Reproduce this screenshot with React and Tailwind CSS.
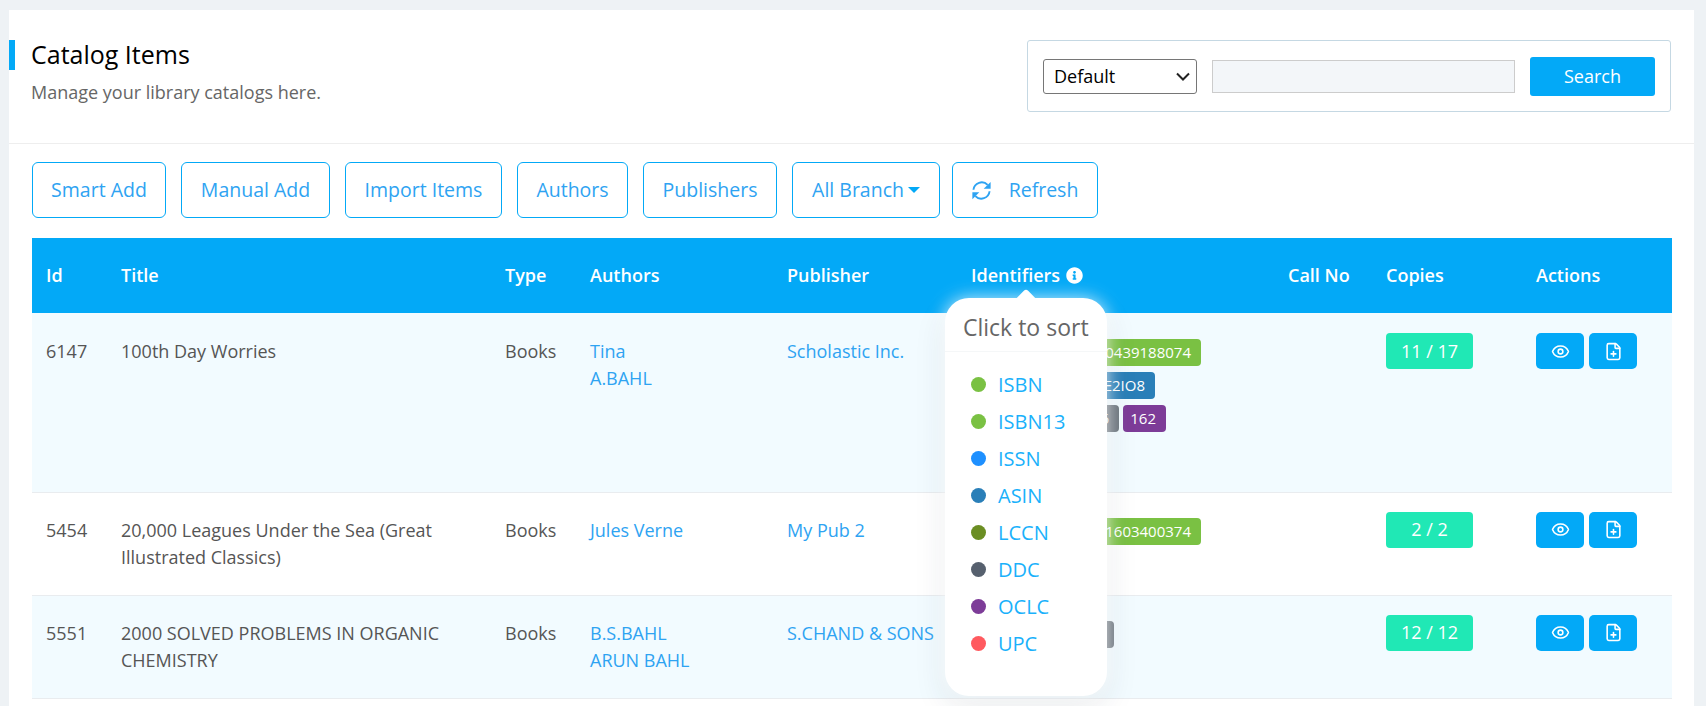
import { Eye, FilePlus } from "lucide-react";
import { FaInfoCircle } from "react-icons/fa";

const toolbarButtons = [
    { label: "Smart Add", width: "w-[134px]" },
    { label: "Manual Add", width: "w-[149px]" },
    { label: "Import Items", width: "w-[157px]" },
    { label: "Authors", width: "w-[111px]" },
];

const sortOptions = [
    { label: "ISBN", color: "bg-[#7ac143]" },
    { label: "ISBN13", color: "bg-[#7ac143]" },
    { label: "ISSN", color: "bg-[#1e90ff]" },
    { label: "ASIN", color: "bg-[#2a7fb8]" },
    { label: "LCCN", color: "bg-[#6b8e23]" },
    { label: "DDC", color: "bg-[#56606e]" },
    { label: "OCLC", color: "bg-[#7d3c98]" },
    { label: "UPC", color: "bg-[#ff5a5f]" },
];

const rows = [
    {
        id: "6147",
        title: "100th Day Worries",
        authors: ["Tina", "A.BAHL"],
        publisher: "Scholastic Inc.",
        copies: "11 / 17",
        height: "h-[179px]",
        stripe: "bg-[#f2fbff]",
        textPad: "pt-[25px]",
        badgePad: "pt-[26px]",
        actionPad: "pt-[20px]",
        badges: [
            ["0439188075", "bg-[#7ac143]", "w-[101px]"],
            ["9780439188074", "bg-[#7ac143]", "w-[125px]"],
            ["B00KWE2IO8", "bg-[#2a7fb8]", "w-[184px]"],
            ["813.6", "bg-[#6c757d]", "w-[148px]"],
            ["162", "bg-[#7d3c98]", "w-[43px]"],
        ],
    },
    {
        id: "5454",
        title: "20,000 Leagues Under the Sea (Great Illustrated Classics)",
        authors: ["Jules Verne"],
        publisher: "My Pub 2",
        copies: "2 / 2",
        height: "h-[103px]",
        stripe: "bg-white",
        textPad: "pt-[24px]",
        badgePad: "pt-[25px]",
        actionPad: "pt-[19px]",
        badges: [
            ["1603400370", "bg-[#7ac143]", "w-[101px]"],
            ["9781603400374", "bg-[#7ac143]", "w-[125px]"],
        ],
    },
    {
        id: "5551",
        title: "2000 SOLVED PROBLEMS IN ORGANIC CHEMISTRY",
        authors: ["B.S.BAHL", "ARUN BAHL"],
        publisher: "S.CHAND & SONS",
        copies: "12 / 12",
        height: "h-[103px]",
        stripe: "bg-[#f2fbff]",
        textPad: "pt-[24px]",
        badgePad: "pt-[25px]",
        actionPad: "pt-[19px]",
        badges: [["547.0076", "bg-[#6c757d]", "w-[143px]"]],
    },
];

function OutlineButton({ className, children }) {
    return (
        <button className={`h-[56px] shrink-0 flex items-center justify-center border border-[#03a9f7] rounded-[6px] text-[19.5px] text-[#2ea3f2] bg-white ${className}`}>
            {children}
        </button>
    );
}

function SyncIcon() {
    return (
        <svg width="23" height="23" viewBox="0 0 24 24" fill="none" className="mr-[16px]">
            <path d="M3.6 11.2A8.6 8.6 0 0 1 18.4 6.2" stroke="currentColor" strokeWidth="2" />
            <path d="M20.4 12.8A8.6 8.6 0 0 1 5.6 17.8" stroke="currentColor" strokeWidth="2" />
            <path d="M21.5 3v7.2h-7.2z" fill="currentColor" />
            <path d="M2.5 21v-7.2h7.2z" fill="currentColor" />
        </svg>
    );
}

function SortPopover() {
    return (
        <div className="absolute left-[913px] top-[60px] w-[162px] h-[398px] bg-white rounded-[24px] z-10 shadow-[0_0_18px_rgba(255,255,255,0.8),0_12px_32px_rgba(30,50,70,0.10)]">
            <div className="absolute left-[73px] top-[-6px] w-[16px] h-[16px] bg-white rotate-45 rounded-[3px]"></div>
            <div className="relative h-[54px] border-b border-[#f5f7f8] pl-[18px] pt-[14px] text-[23px] leading-[30px] text-[#666]">
                Click to sort
            </div>
            <ul className="pt-[14px] pl-[26px]">
                {sortOptions.map((option) => (
                    <li key={option.label} className="h-[37px] flex items-center text-[20px] text-[#1ab1fb]">
                        <span className={`w-[15px] h-[15px] rounded-full mr-[12px] ${option.color}`}></span>
                        {option.label}
                    </li>
                ))}
            </ul>
        </div>
    );
}

export default function App() {
    return (
        <div className="h-[706px] overflow-hidden bg-[#eef2f5] pt-[10px] pl-[9px] pr-[12px] font-['Open_Sans',sans-serif] text-[18px]">
            <div className="h-full bg-white">
                <div className="h-[134px] flex justify-between border-b border-[#eeeeee] pr-[23px]">
                    <div className="flex items-start">
                        <div className="w-[6px] h-[30px] mt-[30px] bg-[#03a9f7]"></div>
                        <div className="ml-[16px] mt-[27px]">
                            <h1 className="text-[25px] leading-[34px] text-black">Catalog Items</h1>
                            <p className="mt-[8px] text-[18px] leading-[27px] text-[#666]">Manage your library catalogs here.</p>
                        </div>
                    </div>
                    <div className="w-[644px] h-[72px] mt-[30px] flex items-center border border-[#c5d8e3] rounded-[3px] pl-[15px] pr-[15px]">
                        <div className="relative w-[154px] h-[35px]">
                            <select className="appearance-none w-full h-full pl-[10px] border border-[#767676] rounded-[3px] bg-white text-[18px] text-black">
                                <option>Default</option>
                            </select>
                            <svg width="14" height="9" viewBox="0 0 14 9" fill="none" className="absolute right-[7px] top-[13px] pointer-events-none">
                                <path d="M1 1.5l6 6 6-6" stroke="#222" strokeWidth="2" />
                            </svg>
                        </div>
                        <input className="w-[303px] h-[33px] ml-[15px] mt-[1px] border border-[#cccccc] bg-[#f3f6f9]" />
                        <button className="w-[125px] h-[39px] ml-[15px] bg-[#03a9f7] rounded-[3px] text-white text-[18px]">Search</button>
                    </div>
                </div>

                <div className="px-[23px] pt-[18px]">
                    <div className="flex gap-[15px]">
                        {toolbarButtons.map((b) => (
                            <OutlineButton key={b.label} className={b.width}>{b.label}</OutlineButton>
                        ))}
                        <OutlineButton className="w-[134px]">Publishers</OutlineButton>
                        <OutlineButton className="w-[148px]">
                            All Branch
                            <span className="ml-[4px] w-0 h-0 border-x-[6px] border-x-transparent border-t-[6px] border-t-[#03a9f7]"></span>
                        </OutlineButton>
                        <OutlineButton className="w-[146px] -ml-[3px] pr-[2px]">
                            <SyncIcon />
                            Refresh
                        </OutlineButton>
                    </div>

                    <div className="relative mt-[20px] w-[1640px]">
                        <table className="w-full table-fixed border-collapse text-left text-[18px] leading-[27px] text-[#555]">
                            <colgroup>
                                <col className="w-[75px]" />
                                <col className="w-[384px]" />
                                <col className="w-[85px]" />
                                <col className="w-[197px]" />
                                <col className="w-[184px]" />
                                <col className="w-[317px]" />
                                <col className="w-[98px]" />
                                <col className="w-[150px]" />
                                <col />
                            </colgroup>
                            <thead>
                                <tr className="h-[75px] bg-[#03a9f7] text-white">
                                    <th className="pl-[14px] font-semibold">Id</th>
                                    <th className="pl-[14px] font-semibold">Title</th>
                                    <th className="pl-[14px] font-semibold">Type</th>
                                    <th className="pl-[14px] font-semibold">Authors</th>
                                    <th className="pl-[14px] font-semibold">Publisher</th>
                                    <th className="pl-[14px] font-semibold">
                                        <span className="flex items-center">
                                            Identifiers
                                            <FaInfoCircle size={17} className="ml-[6px]" />
                                        </span>
                                    </th>
                                    <th className="pl-[14px] font-semibold">Call No</th>
                                    <th className="pl-[14px] font-semibold">Copies</th>
                                    <th className="pl-[14px] font-semibold">Actions</th>
                                </tr>
                            </thead>
                            <tbody>
                                {rows.map((row) => (
                                    <tr key={row.id} className={`${row.height} ${row.stripe} border-b border-[#e9ecef] align-top`}>
                                        <td className={`pl-[14px] ${row.textPad}`}>{row.id}</td>
                                        <td className={`pl-[14px] pr-[10px] ${row.textPad}`}>{row.title}</td>
                                        <td className={`pl-[14px] ${row.textPad}`}>Books</td>
                                        <td className={`pl-[14px] text-[#2ea3f2] ${row.textPad}`}>
                                            {row.authors.map((a) => <div key={a}>{a}</div>)}
                                        </td>
                                        <td className={`pl-[14px] text-[#2ea3f2] ${row.textPad}`}>{row.publisher}</td>
                                        <td className={`pl-[14px] ${row.badgePad}`}>
                                            <div className="flex flex-wrap gap-x-[4px] gap-y-[6px] w-[240px]">
                                                {row.badges.map(([text, color, width]) => (
                                                    <span key={text} className={`h-[27px] flex items-center justify-end pr-[10px] rounded-[4px] text-[15px] text-white ${color} ${width}`}>
                                                        {text}
                                                    </span>
                                                ))}
                                            </div>
                                        </td>
                                        <td></td>
                                        <td className={`pl-[14px] ${row.actionPad}`}>
                                            <span className="w-[87px] h-[36px] flex items-center justify-center rounded-[4px] bg-[#20e8b5] text-white">{row.copies}</span>
                                        </td>
                                        <td className={`pl-[14px] ${row.actionPad}`}>
                                            <div className="flex gap-[5px]">
                                                <button className="w-[48px] h-[36px] flex items-center justify-center rounded-[5px] bg-[#03a9f7] text-white">
                                                    <Eye size={19} />
                                                </button>
                                                <button className="w-[48px] h-[36px] flex items-center justify-center rounded-[5px] bg-[#03a9f7] text-white">
                                                    <FilePlus size={19} />
                                                </button>
                                            </div>
                                        </td>
                                    </tr>
                                ))}
                            </tbody>
                        </table>
                        <SortPopover />
                    </div>
                </div>
            </div>
        </div>
    );
}
